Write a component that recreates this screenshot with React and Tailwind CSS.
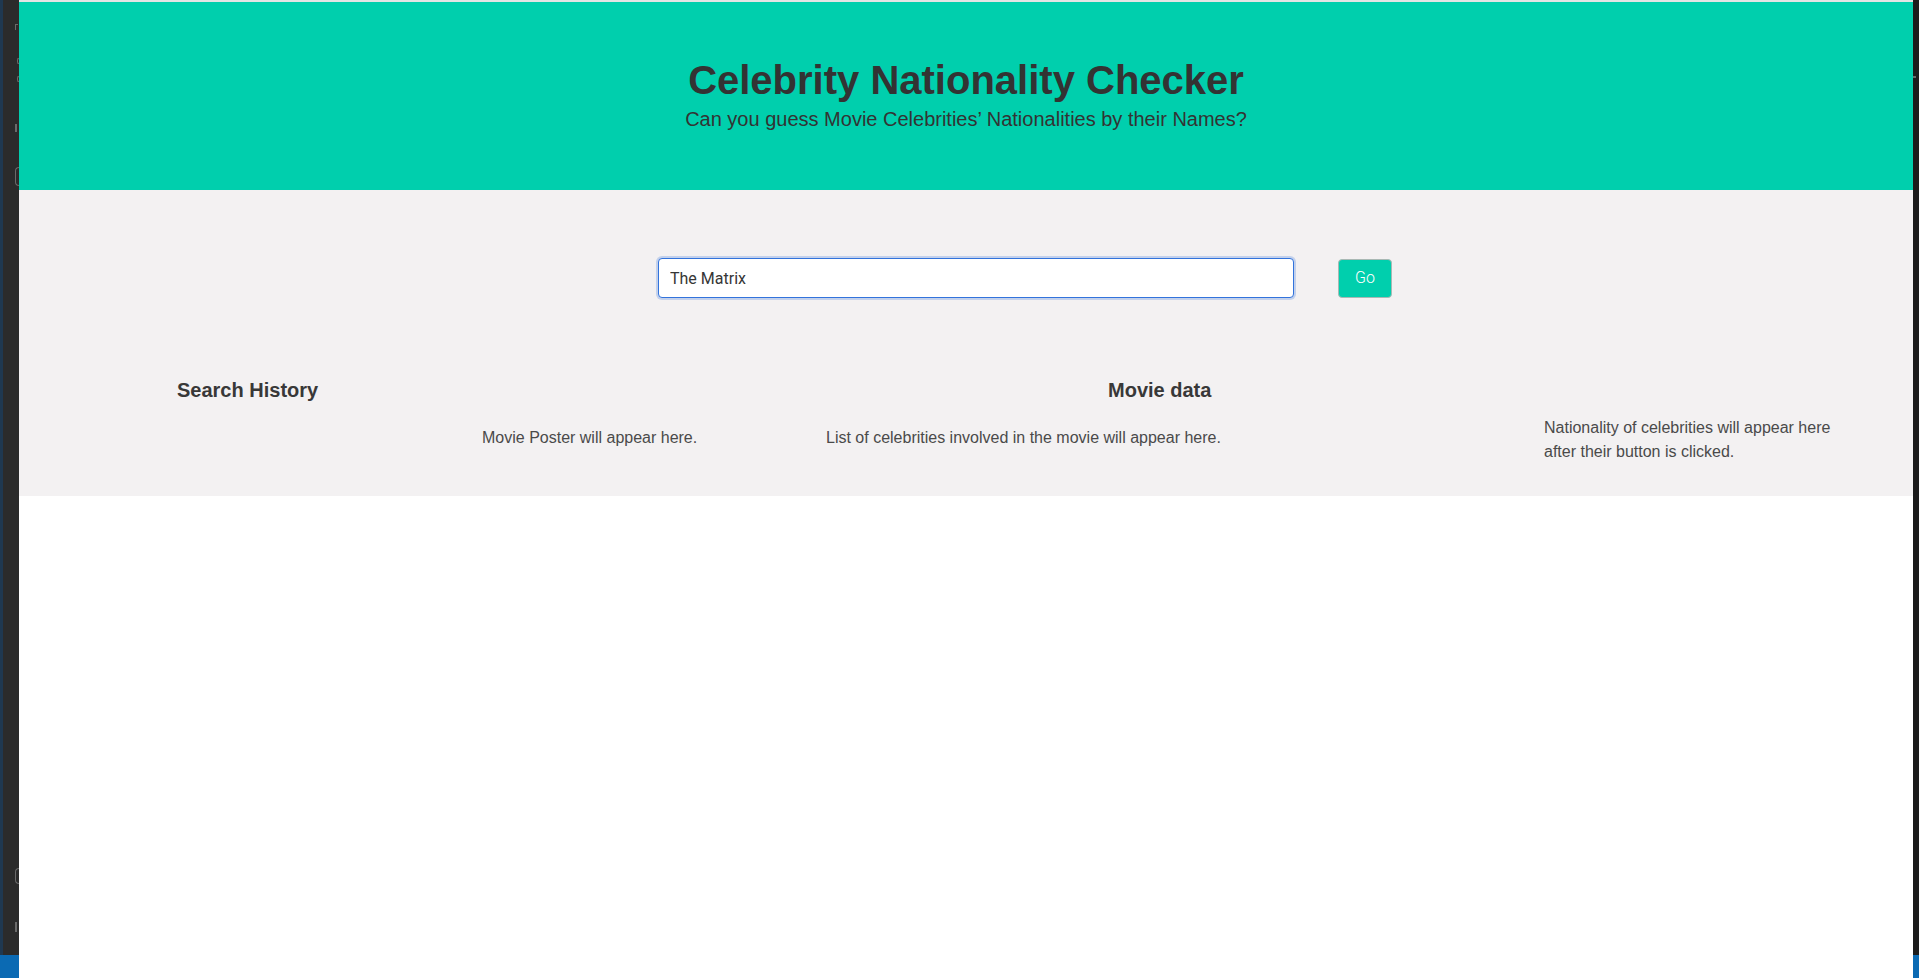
import React, { useState } from 'react';

const App = () => {
  const [query, setQuery] = useState('The Matrix');

  return (
    <div className="flex h-[978px] w-full overflow-hidden bg-white font-['Liberation_Sans',Arial,sans-serif]">
      {/* editor strip on the left edge of the desktop */}
      <div className="relative flex h-full w-[19px] shrink-0 bg-[#2b2b2b]">
        <div className="h-full w-[3px] bg-[#1f3850]" />
        <span className="absolute left-[15px] top-[24px] h-[6px] w-[3px] border-l border-t border-[#6a6a6a]" />
        <span className="absolute left-[17px] top-[58px] h-[6px] w-[2px] rounded-l-full border border-r-0 border-[#6a6a6a]" />
        <span className="absolute left-[17px] top-[76px] h-[6px] w-[2px] rounded-l-full border border-r-0 border-[#6a6a6a]" />
        <span className="absolute left-[15px] top-[124px] h-[8px] w-[4px] border-l-2 border-[#6a6a6a]" />
        <span className="absolute left-[15px] top-[167px] h-[19px] w-[4px] rounded-l-sm border border-r-0 border-[#6a6a6a]" />
        <span className="absolute left-[15px] top-[868px] h-[16px] w-[4px] rounded-l-full border border-r-0 border-[#6a6a6a]" />
        <span className="absolute left-[15px] top-[922px] h-[10px] w-[4px] border-l-2 border-[#6a6a6a]" />
        <div className="absolute bottom-0 left-0 h-[23px] w-full bg-[#0b6ab3]" />
      </div>

      <div className="flex h-full w-[1894px] shrink-0 flex-col">
        <div className="h-[2px] bg-[#e4e4e4]" />

        <header className="flex h-[188px] flex-col items-center bg-[#00cfad] pt-[54px] text-[#333333]">
          <h1 className="text-[40px] font-bold leading-[48px]">Celebrity Nationality Checker</h1>
          <p className="mt-[1px] text-[20px] leading-[28px]">
            Can you guess Movie Celebrities’ Nationalities by their Names?
          </p>
        </header>

        <section className="bg-[#f3f1f2] pb-[32px] pt-[68px]">
          <div className="ml-[639px] flex items-center gap-[44px] font-['Roboto',sans-serif]">
            <input
              type="text"
              value={query}
              onChange={(e) => setQuery(e.target.value)}
              className="h-[40px] w-[636px] rounded-[4px] border border-[#3273dc] bg-white px-[11px] text-[16px] text-[#363636] shadow-[0_0_0_2px_rgba(50,115,220,0.25)] outline-none"
            />
            <button
              type="button"
              className="h-[39px] w-[54px] rounded-[4px] border border-[#a9b8b4] bg-[#00cfad] text-[16px] font-light text-white"
            >
              Go
            </button>
          </div>

          <div className="mt-[78px] flex h-[28px] text-[20px] font-bold leading-[28px] text-[#383838]">
            <h2 className="ml-[158px] w-[931px]">Search History</h2>
            <h2>Movie data</h2>
          </div>

          <div className="mt-[12px] flex items-start text-[16px] leading-[24px] text-[#4a4a4a]">
            <p className="ml-[463px] mt-[10px] w-[344px]">Movie Poster will appear here.</p>
            <p className="mt-[10px] w-[718px]">List of celebrities involved in the movie will appear here.</p>
            <p className="w-[300px]">Nationality of celebrities will appear here after their button is clicked.</p>
          </div>
        </section>

        <div className="flex-1 bg-white" />
      </div>

      {/* thin dark edge on the right */}
      <div className="relative h-full w-[6px] shrink-0 bg-[#1c1c1c]">
        <span className="absolute left-0 top-[76px] h-[2px] w-[3px] bg-[#6a6a6a]" />
        <div className="absolute bottom-0 left-0 h-[23px] w-full bg-[#0b6ab3]" />
      </div>
    </div>
  );
};

export default App;
